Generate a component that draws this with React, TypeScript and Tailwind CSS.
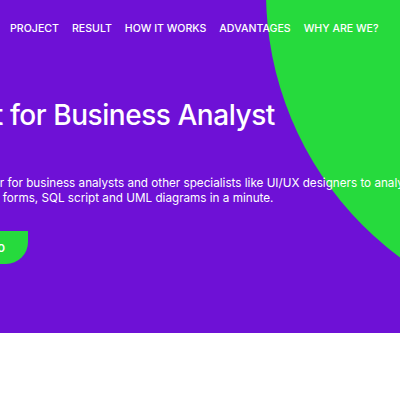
const navItems = ['PROJECT', 'RESULT', 'HOW IT WORKS', 'ADVANTAGES', 'WHY ARE WE?'];

export default function App() {
    return (
        <div className="min-h-[400px] bg-white font-['Inter',sans-serif] text-white">
            <section className="relative h-[333px] overflow-hidden bg-[#6e11d6]">
                {/* big green circle on the right */}
                <div className="absolute top-[-338px] left-[266px] h-[660px] w-[660px] rounded-full bg-[#26da3d]" />

                <nav className="relative flex gap-[13px] pt-[21px] pl-[10px] text-[10.6px] font-medium">
                    {navItems.map((item) => (
                        <a key={item} href="#" className="whitespace-nowrap">
                            {item}
                        </a>
                    ))}
                </nav>

                <div className="relative mt-[60px] -ml-[117px] w-[640px]">
                    <h1 className="text-[28px] leading-[36px] font-medium tracking-[-0.45px] whitespace-nowrap">
                        Assistant for Business Analyst
                    </h1>
                    <p className="mt-[43px] ml-[4px] text-[11.7px] leading-[15px] whitespace-nowrap">
                        A powerful generator for business analysts and other specialists like UI/UX designers to analyze requirements
                        <br />
                        and quickly produce forms, SQL script and UML diagrams in a minute.
                    </p>
                    <button className="mt-[25px] h-[33px] w-[145px] rounded-br-[22px] bg-[#26da3d] pl-[4px] text-[13px] font-medium text-white">
                        Go to the demo
                    </button>
                </div>
            </section>
        </div>
    );
}
